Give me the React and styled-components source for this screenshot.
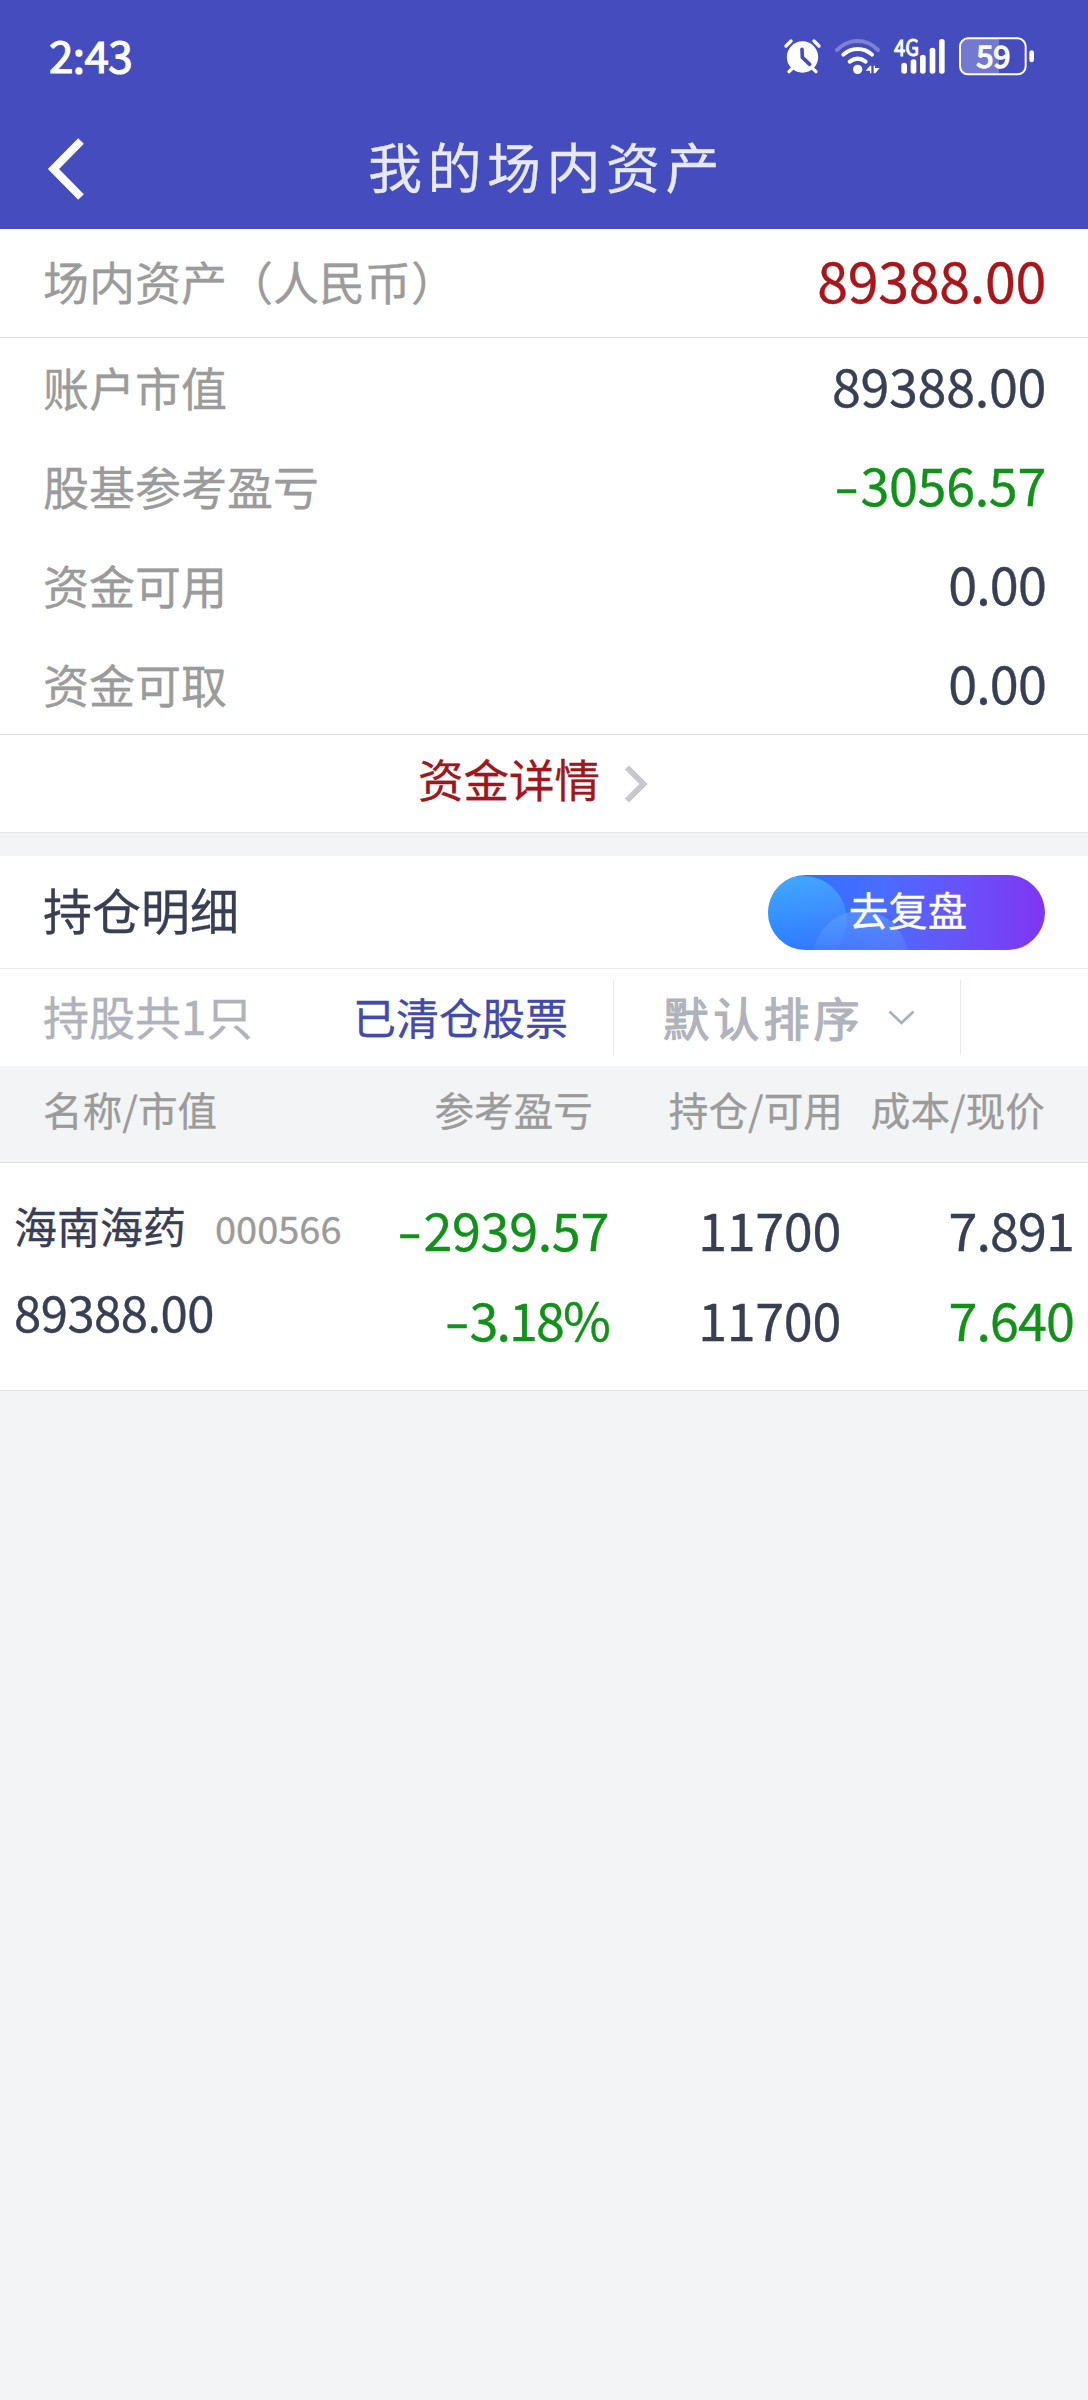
import React from 'react'
import styled, { createGlobalStyle } from 'styled-components'

const NavBlue = '#444cbe'

const funds = [
  { id: 1, label: '账户市值', value: '89388.00' },
  { id: 2, label: '股基参考盈亏', value: '-3056.57', color: 'green' },
  { id: 3, label: '资金可用', value: '0.00', spacing: -0.8 },
  { id: 4, label: '资金可取', value: '0.00', spacing: -0.8 },
]

const holdings = [
  {
    code: '000566',
    name: '海南海药',
    marketValue: '89388.00',
    profit: '-2939.57',
    ratio: '-3.18%',
    held: '11700',
    usable: '11700',
    cost: '7.891',
    price: '7.640',
  },
]

const AlarmIcon = () => (
  <svg width="37" height="38.33" viewBox="72 50 111 115" fill="none">
    <circle cx="127.5" cy="110" r="47" fill="#fff" />
    <path
      d="M78 77L93 62M162 62L177 77M87 154L97 144M168 154L158 144"
      stroke="#fff"
      strokeWidth="10"
      strokeLinecap="round"
    />
    <path
      d="M126 87L127 111L149 132"
      stroke={NavBlue}
      strokeWidth="11"
      strokeLinecap="round"
      strokeLinejoin="round"
    />
  </svg>
)

const WifiIcon = () => (
  <svg width="45" height="38.33" viewBox="225 50 135 115" fill="none">
    <g stroke="#fff" strokeWidth="12" strokeLinecap="round">
      <path d="M231 89Q258 62 293 62T354 89" opacity="0.3" />
      <path d="M250 103Q268 86 293 86T336 103" />
      <path d="M269 124Q293 106 317 124" />
    </g>
    <circle cx="293" cy="147" r="14" fill="#fff" />
    <path d="M317 151L330 136H334V159H330V151ZM341 136H345V143H359L346 159H341Z" fill="#fff" />
  </svg>
)

const SignalIcon = () => (
  <svg width="51" height="38.33" viewBox="402 50 153 115" fill="#fff">
    <text
      x="402"
      y="107"
      fontSize="68"
      textLength="75"
      lengthAdjust="spacingAndGlyphs"
      stroke="#fff"
      strokeWidth="3"
    >
      4G
    </text>
    <rect x="424" y="127" width="17" height="33" rx="8" />
    <rect x="452" y="117" width="17" height="43" rx="8" />
    <rect x="480" y="103" width="17" height="57" rx="8" />
    <rect x="509" y="82" width="17" height="78" rx="8" />
    <rect x="537" y="56" width="17" height="104" rx="8" />
  </svg>
)

const BatteryIcon = () => (
  <svg width="75" height="38.33" viewBox="597 50 225 115" fill="none">
    <path d="M717 56V160H626Q602 160 602 136V80Q602 56 626 56Z" fill="#fff" opacity="0.25" />
    <rect x="600" y="54" width="197" height="108" rx="24" stroke="#fff" strokeWidth="6" />
    <rect x="808" y="90" width="14" height="36" rx="7" fill="#fff" />
    <text
      x="700"
      y="143"
      fontSize="93"
      textAnchor="middle"
      fill="#fff"
      stroke="#fff"
      strokeWidth="4"
    >
      59
    </text>
  </svg>
)

const BackIcon = () => (
  <svg width="36" height="62" viewBox="0 0 36 62" fill="none">
    <path d="M33 3L5.500 31L33 59" stroke="#fff" strokeWidth="8" />
  </svg>
)

const MoreIcon = () => (
  <svg width="24" height="38" viewBox="0 0 24 38" fill="none">
    <path d="M3 2.500L19.500 19L3 35.500" stroke="#c7c8cc" strokeWidth="6" />
  </svg>
)

const CaretIcon = () => (
  <svg width="27" height="15" viewBox="0 0 27 15" fill="none">
    <path d="M1.500 1.500L13.500 13L25.500 1.500" stroke="#a6b0c0" strokeWidth="2.600" />
  </svg>
)

// negative amounts get a wider minus sign than the font's own hyphen
const Amount = ({ children }) =>
  children.startsWith('-') ? (
    <>
      <Minus>-</Minus>
      {children.slice(1)}
    </>
  ) : (
    children
  )

export default function App() {
  return (
    <>
      <GlobalStyle />
      <Page>
        <Header>
          <StatusBar>
            <Time>2:43</Time>
            <StatusIcons>
              <AlarmIcon />
              <WifiIcon />
              <SignalIcon />
              <BatteryIcon />
            </StatusIcons>
          </StatusBar>
          <NavBar>
            <BackButton>
              <BackIcon />
            </BackButton>
            <Title>我的场内资产</Title>
          </NavBar>
        </Header>

        <TotalRow>
          <Label>场内资产（人民币）</Label>
          <Value size={55.5} color="red">
            89388.00
          </Value>
        </TotalRow>
        <FundList>
          {funds.map((item) => (
            <FundRow key={item.id}>
              <Label>{item.label}</Label>
              <Value color={item.color} spacing={item.spacing}>
                <Amount>{item.value}</Amount>
              </Value>
            </FundRow>
          ))}
        </FundList>
        <DetailLink>
          <span>资金详情</span>
          <MoreIcon />
        </DetailLink>

        <SectionHead>
          <SectionTitle>持仓明细</SectionTitle>
          <ReviewButton>
            <span>去复盘</span>
          </ReviewButton>
        </SectionHead>
        <FilterBar>
          <Count>持股共1只</Count>
          <Cleared>已清仓股票</Cleared>
          <Sort>
            <span>默认排序</span>
            <CaretIcon />
          </Sort>
        </FilterBar>

        <TableHead>
          <span>名称/市值</span>
          <span>参考盈亏</span>
          <span>持仓/可用</span>
          <span>成本/现价</span>
        </TableHead>
        {holdings.map((item) => (
          <Holding key={item.code}>
            <NameCell>
              <StockName>
                {item.name}
                <Code>{item.code}</Code>
              </StockName>
              <MarketValue>{item.marketValue}</MarketValue>
            </NameCell>
            <Cell>
              <Num color="green">
                <Amount>{item.profit}</Amount>
              </Num>
              <Num color="green" spacing={-1.9}>
                <Amount>{item.ratio}</Amount>
              </Num>
            </Cell>
            <Cell>
              <Num>{item.held}</Num>
              <Num>{item.usable}</Num>
            </Cell>
            <Cell>
              <Num spacing={-0.9}>{item.cost}</Num>
              <Num spacing={-0.9} color="green">
                {item.price}
              </Num>
            </Cell>
          </Holding>
        ))}
      </Page>
    </>
  )
}

const colors = {
  red: '#a8151b',
  green: '#12911a',
  dark: '#383e54',
}

const GlobalStyle = createGlobalStyle`
  * {
    box-sizing: border-box;
  }
  body {
    margin: 0;
    background: #f3f4f6;
    font-family: 'Noto Sans CJK SC', sans-serif;
    -webkit-text-stroke: 0.35px currentColor;
  }
  svg {
    display: block;
    flex-shrink: 0;
    overflow: visible;
  }
  svg text {
    font-family: 'Noto Sans CJK SC', sans-serif;
  }
`
const Page = styled.div`
  width: 1088px;
  min-height: 2400px;
  background: #f3f4f6;
  color: ${colors.dark};
  white-space: nowrap;
`
const Header = styled.header`
  height: 229px;
  background: ${NavBlue};
`
const StatusBar = styled.div`
  display: flex;
  align-items: center;
  justify-content: space-between;
  height: 112px;
  padding: 0 54px 0 49px;
`
const Time = styled.div`
  color: #fff;
  font-size: 44px;
  line-height: 60px;
  letter-spacing: -0.6px;
  padding-bottom: 4px;
  -webkit-text-stroke: 1.2px #fff;
`
const StatusIcons = styled.div`
  display: flex;
  gap: 14px;
`
const NavBar = styled.div`
  display: grid;
  grid-template-columns: 1fr auto 1fr;
  align-items: center;
  height: 117px;
  padding: 0 48px 4px;
`
const BackButton = styled.button`
  border: none;
  background: none;
  padding: 0;
  justify-self: start;
`
const Title = styled.h1`
  margin: 0;
  padding: 0 0 5px 5px;
  font-size: 54px;
  font-weight: 400;
  line-height: 80px;
  letter-spacing: 5.5px;
  color: #e8e9f7;
`
const FundRow = styled.div`
  display: flex;
  align-items: center;
  justify-content: space-between;
  height: 99px;
  padding: 0 42px 0 43px;
`
const TotalRow = styled(FundRow)`
  height: 109px;
  padding-bottom: 3px;
  background: #fff;
  border-bottom: 1px solid #e3e4e6;
`
const FundList = styled.div`
  height: 397px;
  background: #fff;
  border-bottom: 1px solid #e3e4e6;
`
const Label = styled.div`
  font-size: 46px;
  line-height: 66px;
  padding-bottom: 3px;
  color: #9b9b9b;
`
const Value = styled.div`
  font-size: ${(props) => props.size || 52}px;
  line-height: 76px;
  padding-bottom: 6px;
  letter-spacing: ${(props) => props.spacing || -0.3}px;
  color: ${(props) => colors[props.color || 'dark']};
`
const Minus = styled.span`
  display: inline-block;
  margin-right: 2px;
  transform: scaleX(1.4);
  transform-origin: right;
`
const DetailLink = styled.div`
  display: flex;
  align-items: center;
  justify-content: center;
  gap: 24px;
  height: 98px;
  padding-right: 22px;
  background: #fff;
  border-bottom: 1px solid #e3e4e6;
  color: #a1161c;
  font-size: 45.5px;
  span {
    padding-bottom: 11px;
  }
`
const SectionHead = styled.div`
  display: flex;
  align-items: center;
  justify-content: space-between;
  height: 113px;
  margin-top: 23px;
  padding: 0 43px 0 43px;
  background: #fff;
  border-bottom: 1px solid #e8e9eb;
`
const SectionTitle = styled.h2`
  margin: 0;
  padding-bottom: 6px;
  font-size: 49px;
  font-weight: 400;
  line-height: 70px;
`
const ReviewButton = styled.button`
  position: relative;
  overflow: hidden;
  width: 277px;
  height: 75px;
  border: none;
  border-radius: 38px;
  padding: 0 0 7px 3px;
  color: #fff;
  font-family: inherit;
  font-size: 39.5px;
  line-height: 60px;
  background: linear-gradient(90deg, #2474ff 0%, #4a6cff 42%, #6a50f9 72%, #7f36f3 100%);
  span {
    position: relative;
    z-index: 1;
  }
  /* soft bubbles behind the label */
  &::before,
  &::after {
    content: '';
    position: absolute;
    border-radius: 50%;
  }
  &::before {
    left: -9px;
    top: 1px;
    width: 88px;
    height: 88px;
    background: linear-gradient(170deg, rgba(75, 190, 255, 0.75), rgba(60, 150, 255, 0.1) 85%);
  }
  &::after {
    left: 45px;
    top: 36px;
    width: 95px;
    height: 95px;
    background: linear-gradient(180deg, rgba(100, 165, 255, 0.55), rgba(90, 130, 255, 0.1) 60%);
  }
`
const FilterBar = styled.div`
  display: flex;
  align-items: center;
  height: 97px;
  padding-left: 43px;
  background: #fff;
  color: #b0b2bc;
  font-size: 46px;
  line-height: 66px;
`
const Count = styled.div`
  width: 310px;
  padding-bottom: 5px;
`
const Cleared = styled.div`
  width: 260px;
  padding-bottom: 3px;
  font-size: 43px;
  color: #434aad;
`
const Sort = styled.div`
  display: flex;
  align-items: center;
  gap: 24px;
  width: 348px;
  height: 75px;
  padding-left: 49px;
  border: solid #e6ebed;
  border-width: 0 1px;
  span {
    padding-bottom: 4px;
    letter-spacing: 4.2px;
    -webkit-text-stroke: 1.2px currentColor;
  }
`
const TableHead = styled.div`
  display: grid;
  grid-template-columns: 345px 205px 250px 202px;
  align-items: center;
  height: 97px;
  padding: 0 43px 11px;
  border-bottom: 1px solid #e3e4e6;
  color: #9b9b9b;
  font-size: 39.5px;
  letter-spacing: 0.15px;
  text-align: right;
  span:first-child {
    text-align: left;
  }
`
const Holding = styled.div`
  display: grid;
  grid-template-columns: 341px 254px 232px 233px;
  height: 228px;
  padding-left: 14px;
  background: #fff;
  border-bottom: 1px solid #e3e4e6;
`
const NameCell = styled.div`
  padding-top: 19px;
  line-height: 86px;
`
const StockName = styled.div`
  display: flex;
  align-items: baseline;
  gap: 29px;
  height: 86px;
  font-size: 43px;
`
const Code = styled.span`
  font-size: 38px;
  color: #9b9b9b;
`
const MarketValue = styled.div`
  font-size: 49px;
  letter-spacing: -0.5px;
`
const Cell = styled.div`
  padding-top: 21px;
  text-align: right;
`
const Num = styled.div`
  font-size: 52px;
  line-height: 90px;
  letter-spacing: ${(props) => props.spacing || -0.3}px;
  color: ${(props) => colors[props.color || 'dark']};
`
